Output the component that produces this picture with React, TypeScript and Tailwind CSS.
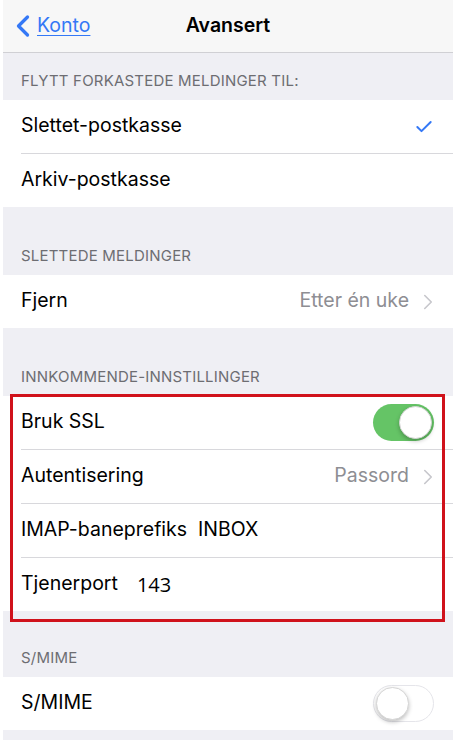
import { ChevronLeft, ChevronRight, Check } from 'lucide-react';

const font = { fontFamily: 'Inter, "Noto Sans", sans-serif' };

const Header = ({ text, size = 'h-[68px]' }: { text: string; size?: string }) => (
  <div className={`flex items-end bg-[#efeff4] px-[18px] pb-[10px] ${size}`}>
    <span className="text-[15px] leading-[18px] tracking-[0.2px] text-[#6d6d72]">{text}</span>
  </div>
);

const Sep = () => <div className="ml-[18px] h-px bg-[#d8d8dc]" />;

const Toggle = ({ on }: { on: boolean }) => (
  <div
    className={`flex h-[37px] w-[61px] items-center rounded-full p-[2px] ${
      on ? 'justify-end bg-[#65c466]' : 'justify-start border-[1.5px] border-[#e5e5ea] bg-white'
    }`}
  >
    <div className="h-[33px] w-[33px] rounded-full border border-[#d5d5d5] bg-white shadow-[0_2px_4px_rgba(0,0,0,0.25)]" />
  </div>
);

const Row = ({ children, right }: { children: React.ReactNode; right?: React.ReactNode }) => (
  <div className="flex h-[53px] items-center justify-between bg-white pl-[18px] pr-[19px]">
    <div className="flex items-center pb-[2px] text-[19.5px] text-black">{children}</div>
    {right}
  </div>
);

const Value = ({ text }: { text: string }) => (
  <div className="flex items-center gap-[6px] text-[19.5px] text-[#8e8e93]">
    <span className="pb-[2px]">{text}</span>
    <ChevronRight size={26} strokeWidth={1.5} className="mr-[-7px] text-[#c7c7cc]" />
  </div>
);

export default function App() {
  return (
    <div className="h-[744px] w-[455px] overflow-hidden bg-white pl-[3px] pr-[2px]" style={font}>
      <div className="relative">
        <div className="flex h-[53px] items-center border-b border-[#d0d0d4] bg-[#f7f7f7]">
          <div className="flex w-[120px] items-center pl-[2px] text-[#3478f6]">
            <ChevronLeft size={36} strokeWidth={2.2} />
            <span className="ml-[-4px] text-[19.5px] underline underline-offset-[3px]">Konto</span>
          </div>
          <div className="flex-1 text-center text-[19.5px] font-semibold text-black">Avansert</div>
          <div className="w-[120px]" />
        </div>

        <Header text="FLYTT FORKASTEDE MELDINGER TIL:" size="h-[47px]" />
        <Row right={<Check size={20} strokeWidth={2.4} className="text-[#3478f6]" />}>Slettet-postkasse</Row>
        <Sep />
        <Row>Arkiv-postkasse</Row>

        <Header text="SLETTEDE MELDINGER" />
        <Row right={<Value text="Etter én uke" />}>Fjern</Row>

        <Header text="INNKOMMENDE-INNSTILLINGER" />
        <Row right={<Toggle on />}>Bruk SSL</Row>
        <Sep />
        <Row right={<Value text="Passord" />}>Autentisering</Row>
        <Sep />
        <Row>
          IMAP-baneprefiks
          <span className="ml-[11px]">INBOX</span>
        </Row>
        <Sep />
        <Row>
          Tjenerport
          <span className="ml-[19px] mt-[3px] text-[20px]" style={{ fontFamily: '"Open Sans", sans-serif' }}>
            143
          </span>
        </Row>

        <Header text="S/MIME" size="h-[66px]" />
        <Row right={<Toggle on={false} />}>S/MIME</Row>
        <div className="h-[10px] bg-[#efeff4]" />

        <div className="pointer-events-none absolute left-[7px] top-[394px] h-[228px] w-[435px] border-[3px] border-[#d0121b]" />
      </div>
    </div>
  );
}
